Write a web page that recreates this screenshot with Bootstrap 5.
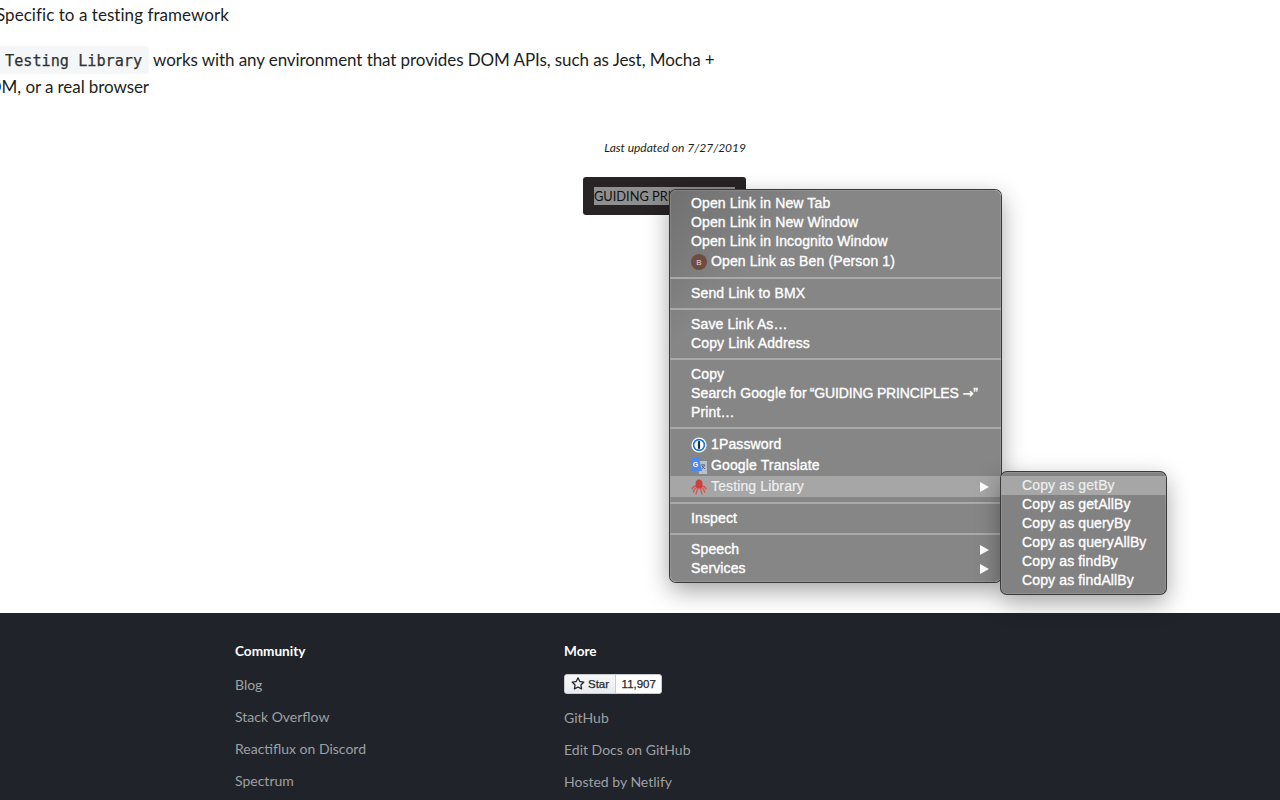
<!DOCTYPE html>
<html lang="en">
<head>
<meta charset="utf-8">
<title>Guiding Principles</title>
<link rel="stylesheet" href="https://cdn.jsdelivr.net/npm/bootstrap@5.3.0/dist/css/bootstrap.min.css">
<style>
html,body{height:800px;overflow:hidden;background:#fff}
body{font-family:"Lato",sans-serif;color:#1c1e21;position:relative}
.page-main{height:613px;padding-top:1px;margin-left:-4px;width:750px}
.doc-line{font-size:17px;letter-spacing:-.08px;line-height:27px;margin:0 0 18px;white-space:nowrap}
.doc-first{letter-spacing:.05px}
.doc-code{font-family:"DejaVu Sans Mono",monospace;font-size:15.2px;line-height:1;letter-spacing:0;-webkit-text-stroke:.25px #333;background:#f5f6f7;border-radius:3px;padding:6px 7px 4px 9px;color:#333}
.doc-cut{margin-left:-37px}
.stamp{font-size:12px;font-style:italic;text-align:right;line-height:18px;margin-top:39px}
.next-wrap{margin-top:20px}
.next-btn{background:#282324;border-radius:3px;width:163px;height:38px;display:flex;align-items:center;padding-left:11px}
.next-sel{background:#8f8f8f;color:#111;font-size:12.8px;line-height:18px;width:141px;white-space:nowrap;overflow:hidden}
.site-foot{height:187px;background:#20232a;padding:29px 0 0 235px;overflow:hidden}
.foot-col{width:329px}
.foot-head{font-size:13.6px;font-weight:700;color:#fff;line-height:18px;margin-bottom:15px}
.foot-link{display:block;color:#9ea0a3;font-size:14px;line-height:20px;margin-bottom:12px;text-decoration:none}
.gh-badge{display:flex;width:fit-content;height:20px;margin:-1px 0 14px;font-family:"Liberation Sans",sans-serif;font-size:11.5px;color:#24292e;-webkit-text-stroke:.25px #24292e;line-height:18px;background:#fff;border-radius:3px;overflow:hidden;border:1px solid #c9cbcf}
.gh-star{display:flex;align-items:center;gap:3px;padding:0 6px;background:linear-gradient(#f6f7f8,#eaecef);border-right:1px solid #c9cbcf}
.gh-count{padding:0 5.500px}
.ctx-menu{position:absolute;background:#868686;border-radius:6px;box-shadow:0 0 0 1px #3a3a3a,inset 0 0 0 1px rgba(255,255,255,.12),0 8px 24px rgba(0,0,0,.38);font-family:"Liberation Sans",sans-serif;font-size:14px;letter-spacing:.13px;color:#fff;-webkit-text-stroke:.35px #fff}
.ctx-main{left:670px;top:190px;width:331px;height:392px;padding-top:4px;background:linear-gradient(135deg,#707070 0,#868686 22%,#868686 100%)}
.ctx-sub{left:1001px;top:472px;width:165px;height:122px;padding-top:4px;background:#828282}
.ctx-item{height:19px;line-height:19px;padding-left:21px;padding-right:12px;display:flex;align-items:center;white-space:nowrap}
.ctx-icon{height:21px;gap:4px}
.ctx-icon svg{flex:none}
.ctx-active{background:#a6a6a6;color:#eee;-webkit-text-stroke:.2px #eee}
.ctx-sep{height:2px;background:#a9a9a9;margin:5px 0}
.ctx-arrow{margin-left:auto;width:0;height:0;border-left:9px solid #fff;border-top:5px solid transparent;border-bottom:5px solid transparent}
.ctx-caps{letter-spacing:-.15px;margin:0 3px}
.ctx-glyph{font-family:"DejaVu Sans",sans-serif;font-size:13px;letter-spacing:0}
</style>
</head>
<body>
<main class="page-main">
  <p class="doc-line doc-first">Specific to a testing framework</p>
  <p class="doc-line mb-0"><code class="doc-code">Testing Library</code> works with any environment that provides DOM APIs, such as Jest, Mocha +<br><span class="doc-cut">JSDOM, or a real browser</span></p>
  <p class="stamp mb-0">Last updated on 7/27/2019</p>
  <div class="next-wrap d-flex justify-content-end">
    <div class="next-btn"><span class="next-sel">GUIDING PRINCIPLES →</span></div>
  </div>
</main>
<footer class="site-foot d-flex">
  <div class="foot-col">
    <div class="foot-head">Community</div>
    <a class="foot-link">Blog</a>
    <a class="foot-link">Stack Overflow</a>
    <a class="foot-link">Reactiflux on Discord</a>
    <a class="foot-link">Spectrum</a>
  </div>
  <div class="foot-col">
    <div class="foot-head">More</div>
    <div class="gh-badge"><span class="gh-star"><svg width="14" height="14" viewBox="0 0 16 16" fill="#24292e"><path d="M8 .25a.75.75 0 0 1 .673.418l1.882 3.815 4.21.612a.75.75 0 0 1 .416 1.279l-3.046 2.97.719 4.192a.751.751 0 0 1-1.088.791L8 12.347l-3.766 1.98a.75.75 0 0 1-1.088-.79l.72-4.194L.818 6.374a.75.75 0 0 1 .416-1.28l4.21-.611L7.327.668A.75.75 0 0 1 8 .25Zm0 2.445L6.615 5.5a.75.75 0 0 1-.564.41l-3.097.45 2.24 2.184a.75.75 0 0 1 .216.664l-.528 3.084 2.769-1.456a.75.75 0 0 1 .698 0l2.77 1.456-.53-3.084a.75.75 0 0 1 .216-.664l2.24-2.183-3.096-.45a.75.75 0 0 1-.564-.41L8 2.694Z"/></svg>Star</span><span class="gh-count">11,907</span></div>
    <a class="foot-link">GitHub</a>
    <a class="foot-link">Edit Docs on GitHub</a>
    <a class="foot-link">Hosted by Netlify</a>
  </div>
</footer>

<div class="ctx-menu ctx-main">
  <div class="ctx-item">Open Link in New Tab</div>
  <div class="ctx-item">Open Link in New Window</div>
  <div class="ctx-item">Open Link in Incognito Window</div>
  <div class="ctx-item ctx-icon"><svg width="16" height="16" viewBox="0 0 16 16"><circle cx="8" cy="8" r="8" fill="#6d4c41"/><text x="8" y="11" font-size="8" text-anchor="middle" fill="#e8dcd8" stroke="none" font-family="Liberation Sans">B</text></svg>Open Link as Ben (Person 1)</div>
  <div class="ctx-sep"></div>
  <div class="ctx-item">Send Link to BMX</div>
  <div class="ctx-sep"></div>
  <div class="ctx-item">Save Link As…</div>
  <div class="ctx-item">Copy Link Address</div>
  <div class="ctx-sep"></div>
  <div class="ctx-item">Copy</div>
  <div class="ctx-item">Search Google for<span class="ctx-caps">“GUIDING PRINCIPLES <span class="ctx-glyph">→</span>”</span></div>
  <div class="ctx-item">Print…</div>
  <div class="ctx-sep"></div>
  <div class="ctx-item ctx-icon"><svg width="16" height="16" viewBox="0 0 16 16"><circle cx="8" cy="8" r="7.6" fill="#fff"/><circle cx="8" cy="8" r="6.2" fill="#1a73d9"/><circle cx="8" cy="8" r="4.6" fill="#fff"/><rect x="6.9" y="4" width="2.2" height="8" rx="1" fill="#17314f"/></svg>1Password</div>
  <div class="ctx-item ctx-icon"><svg width="16" height="16" viewBox="0 0 16 16"><path d="M7 3h9v13H8z" fill="#b9c0c7"/><path d="M10 7h4M12 6v1M11 11l3-4M11 8l3 3" stroke="#5f6a75" stroke-width="1" fill="none"/><path d="M0 0h8l3 13H0z" fill="#4a8af0"/><text x="4.6" y="9" font-size="7" font-weight="700" text-anchor="middle" fill="#fff" font-family="Liberation Sans">G</text></svg>Google Translate</div>
  <div class="ctx-item ctx-icon ctx-active"><svg width="16" height="16" viewBox="0 0 16 16"><g fill="none" stroke="#d9534f" stroke-width="1.3" stroke-linecap="round"><path d="M5.500 7Q2 7 1 10M6 8.500Q3 9.500 2.500 13M7 9.500Q5.500 12 5 15M9 9.500Q10.500 12 11 15M10 8.500Q13 9.500 13.500 13M10.500 7Q14 7 15 10"/></g><ellipse cx="8" cy="5" rx="3.500" ry="4.500" fill="#c9403c"/></svg>Testing Library<span class="ctx-arrow"></span></div>
  <div class="ctx-sep"></div>
  <div class="ctx-item">Inspect</div>
  <div class="ctx-sep"></div>
  <div class="ctx-item">Speech<span class="ctx-arrow"></span></div>
  <div class="ctx-item">Services<span class="ctx-arrow"></span></div>
</div>
<div class="ctx-menu ctx-sub">
  <div class="ctx-item ctx-active">Copy as getBy</div>
  <div class="ctx-item">Copy as getAllBy</div>
  <div class="ctx-item">Copy as queryBy</div>
  <div class="ctx-item">Copy as queryAllBy</div>
  <div class="ctx-item">Copy as findBy</div>
  <div class="ctx-item">Copy as findAllBy</div>
</div>
<script src="https://cdn.jsdelivr.net/npm/bootstrap@5.3.0/dist/js/bootstrap.bundle.min.js"></script>
</body>
</html>
